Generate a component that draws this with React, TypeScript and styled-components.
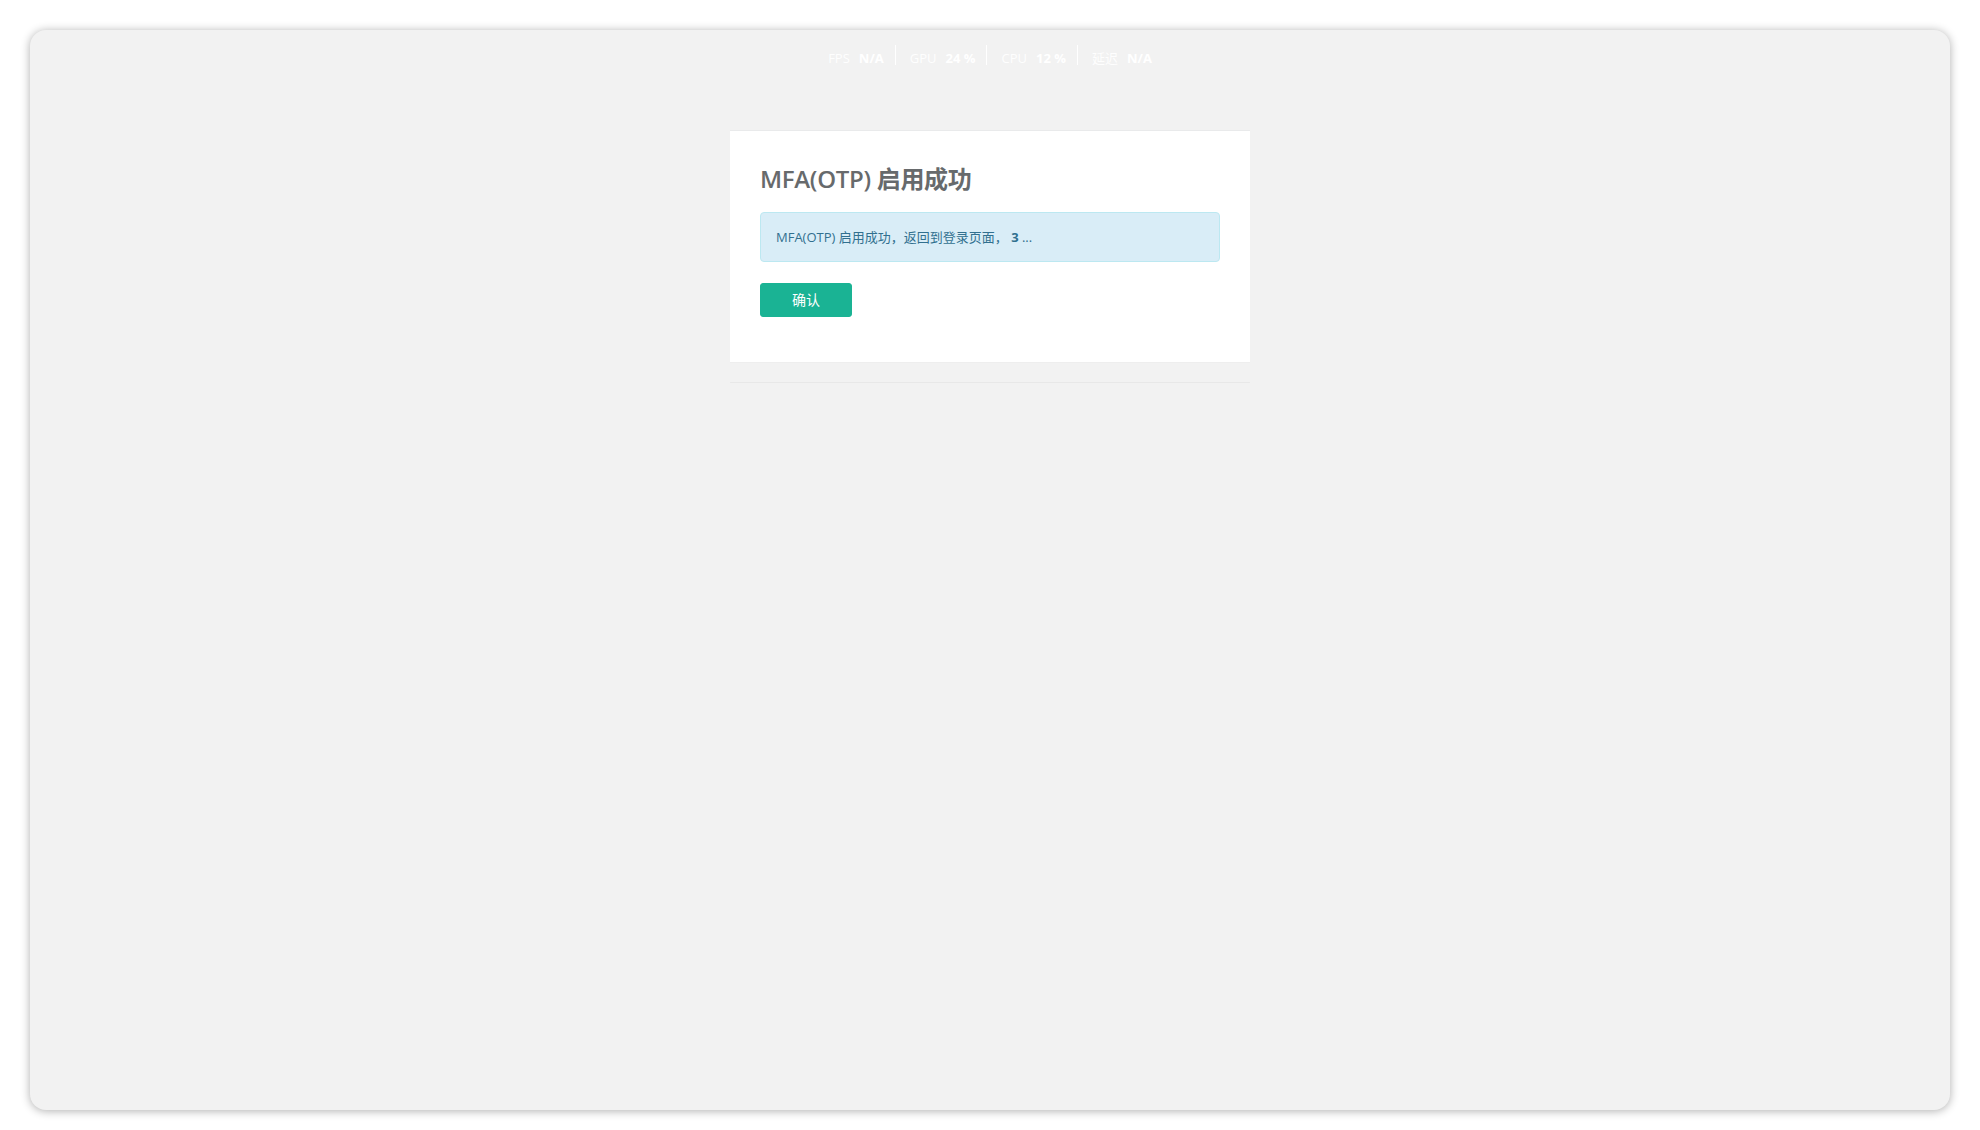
import React from "react";
import styled, { createGlobalStyle } from "styled-components";

const GlobalStyle = createGlobalStyle`
  html, body {
    margin: 0;
    padding: 0;
    background: #ffffff;
  }
  body {
    font-family: "Open Sans", "Noto Sans CJK SC", "Noto Sans", sans-serif;
    -webkit-font-smoothing: antialiased;
  }
  * { box-sizing: border-box; }
`;

const Page = styled.div`
  width: 1980px;
  height: 1130px;
  padding: 30px;
`;

const Window = styled.div`
  width: 1920px;
  height: 1080px;
  background: #f2f2f2;
  border-radius: 16px;
  box-shadow: 0 1px 10px rgba(0, 0, 0, 0.32);
  display: flex;
  flex-direction: column;
  align-items: center;
  overflow: hidden;
`;

const StatsBar = styled.div`
  display: flex;
  align-items: flex-start;
  margin-top: 15px;
  height: 20px;
`;

const Stat = styled.span`
  display: inline-flex;
  align-items: baseline;
  gap: 9px;
  font-size: 13px;
  line-height: 20px;
  padding-top: 3px;
  color: rgba(255, 255, 255, 0.95);
  white-space: nowrap;
`;

const StatValue = styled.b`
  font-weight: 700;
  color: #ffffff;
`;

const Sep = styled.span`
  width: 1px;
  height: 20px;
  background: #ffffff;
  margin: 0 14px 0 11px;
`;

const Card = styled.div`
  margin-top: 65px;
  width: 520px;
  background: #ffffff;
  border-top: 1px solid #e9eaeb;
  border-bottom: 1px solid #eeeeee;
  padding: 35px 30px 45px;
`;

const Title = styled.h2`
  margin: 0;
  font-size: 24px;
  line-height: 26px;
  font-weight: 600;
  letter-spacing: -0.3px;
  color: #676a6c;
`;

const Alert = styled.div`
  margin-top: 20px;
  background: #d9edf7;
  border: 1px solid #bce8f1;
  border-radius: 4px;
  color: #31708f;
  padding: 15px;
  font-size: 13px;
  line-height: 18px;

  strong {
    font-weight: 700;
  }
`;

const Button = styled.button`
  margin-top: 21px;
  width: 92px;
  height: 34px;
  background: #1ab394;
  border: 1px solid #1ab394;
  border-radius: 3px;
  color: #ffffff;
  font-family: inherit;
  font-size: 14px;
  line-height: 20px;
  cursor: pointer;
  display: block;
`;

const FooterLine = styled.div`
  margin-top: 19px;
  width: 520px;
  height: 0;
  border-top: 1px solid #e8e8e8;
  border-radius: 2px;
`;

const stats = [
  { label: "FPS", value: "N/A" },
  { label: "GPU", value: "24 %" },
  { label: "CPU", value: "12 %" },
  { label: "延迟", value: "N/A" },
];

export default function App() {
  return (
    <>
      <GlobalStyle />
      <Page>
        <Window>
          <StatsBar>
            {stats.map((s, i) => (
              <React.Fragment key={s.label}>
                {i > 0 && <Sep />}
                <Stat>
                  {s.label}
                  <StatValue>{s.value}</StatValue>
                </Stat>
              </React.Fragment>
            ))}
          </StatsBar>
          <Card>
            <Title>MFA(OTP) 启用成功</Title>
            <Alert>
              MFA(OTP) 启用成功，返回到登录页面， <strong>3</strong> ...
            </Alert>
            <Button type="button">确认</Button>
          </Card>
          <FooterLine />
        </Window>
      </Page>
    </>
  );
}
